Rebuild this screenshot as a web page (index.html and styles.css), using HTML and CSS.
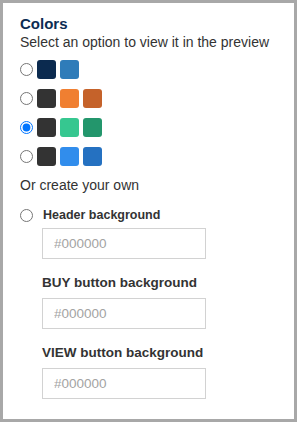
FILE: index.html
```html
<!DOCTYPE html>
<html lang="en">
<head>
  <meta charset="UTF-8" />
  <meta name="viewport" content="width=device-width, initial-scale=1.0">
  <title>Colors</title>
  <link rel="stylesheet" href="styles.css">
</head>
<body>
  <div class="panel">
    <h2 class="panel-title">Colors</h2>
    <p class="panel-hint">Select an option to view it in the preview</p>

    <div class="preset-list">
      <label class="preset">
        <input type="radio" name="scheme" />
        <span class="swatch" style="background:#0b2a4f"></span>
        <span class="swatch" style="background:#2f7cb9"></span>
      </label>
      <label class="preset">
        <input type="radio" name="scheme" />
        <span class="swatch" style="background:#333333"></span>
        <span class="swatch" style="background:#f07f31"></span>
        <span class="swatch" style="background:#c5622a"></span>
      </label>
      <label class="preset">
        <input type="radio" name="scheme" checked />
        <span class="swatch" style="background:#333333"></span>
        <span class="swatch" style="background:#36c790"></span>
        <span class="swatch" style="background:#23966c"></span>
      </label>
      <label class="preset">
        <input type="radio" name="scheme" />
        <span class="swatch" style="background:#333333"></span>
        <span class="swatch" style="background:#318dec"></span>
        <span class="swatch" style="background:#2571c1"></span>
      </label>
    </div>

    <p class="custom-title">Or create your own</p>

    <label class="custom-option">
      <input type="radio" name="scheme" />
      <span>Header background</span>
    </label>

    <div class="custom-fields">
      <input class="color-input" type="text" placeholder="#000000" />

      <div class="field-label">BUY button background</div>
      <input class="color-input" type="text" placeholder="#000000" />

      <div class="field-label">VIEW button background</div>
      <input class="color-input" type="text" placeholder="#000000" />
    </div>
  </div>
</body>
</html>
```

FILE: styles.css
```css
body {
  margin: 0;
  font-family: "Liberation Sans", Arial, sans-serif;
  background-color: white;
  color: #333333;
}

.panel {
  width: 297px;
  height: 422px;
  box-sizing: border-box;
  border: 3px solid #a8a8a8;
  padding: 12px 0 0 17px;
}

.panel-title {
  margin: 0;
  font-size: 15px;
  line-height: 18px;
  font-weight: bold;
  color: #0c2c52;
}

.panel-hint {
  margin: 0;
  font-size: 14px;
  line-height: 18px;
}

.preset-list {
  display: flex;
  flex-direction: column;
  gap: 10px;
  margin-top: 9px;
}

.preset {
  display: flex;
  align-items: center;
  gap: 4px;
  height: 19px;
  cursor: pointer;
}

.preset input,
.custom-option input {
  width: 13px;
  height: 13px;
  margin: 0;
}

.swatch {
  width: 19px;
  height: 19px;
  border-radius: 3px;
}

.custom-title {
  margin: 10px 0 0;
  font-size: 14px;
  line-height: 18px;
}

.custom-option {
  display: flex;
  align-items: center;
  gap: 10px;
  margin-top: 12px;
  font-size: 12.5px;
  line-height: 18px;
  font-weight: bold;
  cursor: pointer;
}

.custom-fields {
  padding-left: 22px;
  padding-top: 4px;
}

.field-label {
  margin: 15px 0 6px;
  font-size: 13.5px;
  line-height: 18px;
  font-weight: bold;
}

.color-input {
  display: block;
  width: 164px;
  height: 31px;
  box-sizing: border-box;
  margin: 0;
  padding: 0 11px;
  border: 1px solid #d2d2d2;
  font-family: "Liberation Sans", Arial, sans-serif;
  font-size: 13.5px;
  color: #333333;
}

.color-input::placeholder {
  color: #a3a3a3;
}
```
